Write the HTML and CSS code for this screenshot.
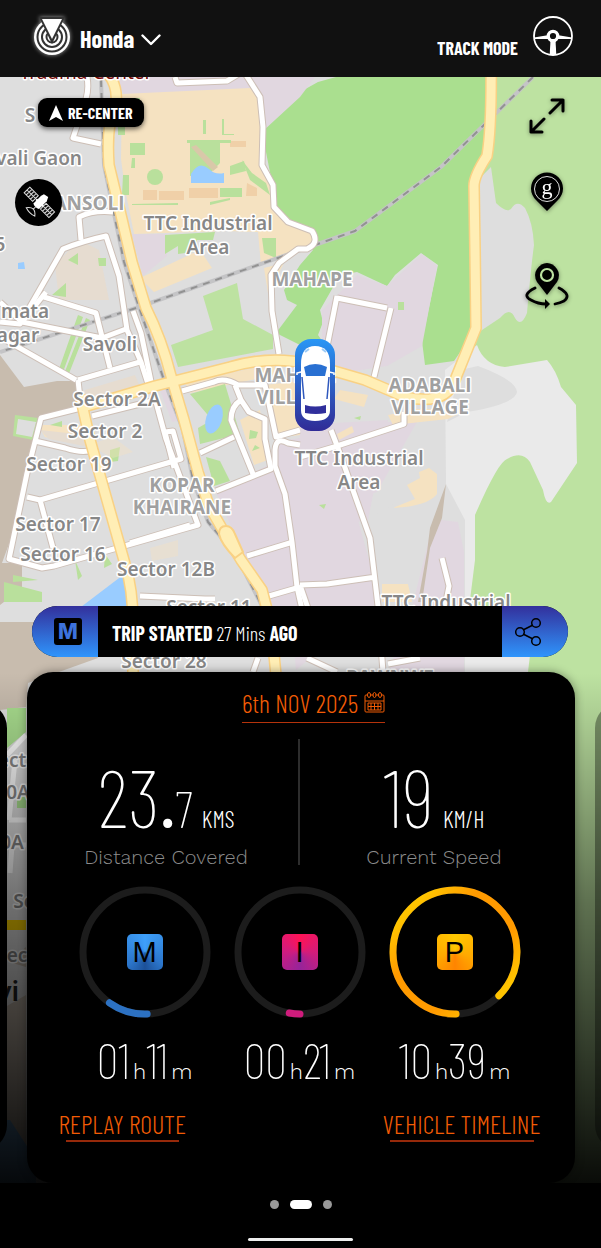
FILE: index.html
```
<!DOCTYPE html>
<html lang="en">
	<head>
		<meta charset="utf-8" />
		<meta name="viewport" content="width=device-width, initial-scale=1" />
		<title>Track Mode</title>
		<link rel="stylesheet" href="styles.css">
	</head>
	<body>
		<header class="topbar">
			<button class="vehicle" type="button">
				<svg class="logo" width="38" height="40" viewBox="0 0 38 40" aria-hidden="true">
					<circle cx="19" cy="20" r="18" fill="#fff"/>
					<g fill="none" stroke="#333" stroke-width="2">
						<circle cx="19" cy="20" r="14.5"/>
						<circle cx="19" cy="20" r="10"/>
						<circle cx="19" cy="20" r="5.5"/>
					</g>
					<path d="M6 0h26L19 27z" fill="#333"/>
					<path d="M9 2h20L19 22z" fill="#fff"/>
				</svg>
				<span>Honda</span>
				<svg width="20" height="12" viewBox="0 0 20 12" aria-hidden="true"><path d="M1.500 1.500l8.500 8.500 8.500-8.500" fill="none" stroke="#fff" stroke-width="2.400" stroke-linecap="round" stroke-linejoin="round"/></svg>
			</button>
			<button class="mode" type="button">
				<span>TRACK MODE</span>
				<svg width="40" height="40" viewBox="0 0 40 40" aria-hidden="true">
					<circle cx="20" cy="20" r="19" fill="none" stroke="#fff" stroke-width="1.800"/>
					<path d="M1 21.500l15-2.500v4L1 23zM39 21.500l-15-2.500v4l15 0z" fill="#fff"/>
					<path d="M17.500 24h5l.8 15h-6.600z" fill="#fff"/>
					<circle cx="20" cy="20" r="4.700" fill="#111" stroke="#fff" stroke-width="3.200"/>
				</svg>
			</button>
		</header>

		<main class="stage">
			<svg class="map" viewBox="0 77 601 1106" preserveAspectRatio="xMidYMin slice" role="img" aria-label="Map">
				<defs>
					<g id="streets">
						<path d="M87 77q2 12-1 22L73 138l28 6"/>
						<path d="M175 77l2 6 50-2 15-9"/>
						<path d="M246 75l14 22 3 30-1 38 11 20 1 22 14 15 24 9q8 12-5 18l-9 0-19 14-8 12 1 36 7 43"/>
						<path d="M81 240l-2-23q14-7 34-5"/>
						<path d="M0 322l20 2 43-75q20-8 43-13l13 40 8 54 14 32 7 22"/>
						<path d="M44 297l52 16 14 55M0 337l76 43M0 302l22 20 80 16 24-9M22 322l24-30"/>
						<path d="M78 380l62-18M78 380l3 28-40 10-14 55-18 86 33 9 12-2 144-41-32-86-13-48-12-58-8-22"/>
						<path d="M35 441l30 7q18 6 27 2M92 416l60-15M27 497l13 3 141-41-8-28-8 1 9 36M40 500l13 48"/>
						<path d="M130 543l60-18"/>
						<path d="M182 391l32-9q10-5 24 3h27l11 52 24-7"/>
						<path d="M235 385l6 15q-10 6-10 20l22 54M241 400l8 12 16 7v20l6 30-55 22M200 453l34-16"/>
						<path d="M300 445l-12-2q-12-7-13 7l0 16 10 28 7 48 5 45 8 36"/>
						<path d="M247 556l46-14M269 596l31-9"/>
						<path d="M337 298l50 10M337 296l-13 66M391 308l-17 69M404 412v12l-70 23-34 10"/>
						<path d="M331 430l7 18 32 90 8 68 5 66M300 585l27-1 49-7M300 585l12 35M442 558l7 28-4 20"/>
						<path d="M140 596l65 3 10 0M307 658l30 14M388 664l32-6M258 658l-5 14"/>
					</g>
					<g id="highways">
						<path d="M108 74Q118 86 116 104Q106 124 109 165L121 215L132 262L146 308Q162 340 171 376L184 420L198 472L209 506L224 532L241 560L262 590L271 625L276 675"/>
						<path d="M80 408l75-22 75-19q40-12 80-3l55 16 40 17q40 9 50-17l21-52-1-78-1-64q0-10 13-30 5-30 4-100"/>
						<path d="M80 395l10 45 35 124q8 25 8 60v48"/>
					</g>
					<path id="rail" d="M533 77l-92 90-86 64-46 16-170 60L0 352"/>
					<path id="rail-south" d="M101 80L104 165L124 262L140 310L164 380L183 430L193 480L208 522L236 555L262 606"/>
					<linearGradient id="car-bg" x1="0" y1="0" x2="0" y2="1">
						<stop offset="0" stop-color="#2996f5"/>
						<stop offset="1" stop-color="#302b96"/>
					</linearGradient>
				</defs>

				<rect y="77" width="601" height="1106" fill="#dedede"/>

				<!-- coast and hills -->
				<path fill="#c8bcae" d="M0 355l24 32 33-6 20 0 4 28-38 10-17 50-8 50-16 44 20 0v25L0 605z"/>
				<path fill="#c8bcae" d="M0 622l78 0 20 36-70 25-6 80H0z"/>
				<path fill="#bde2a1" d="M487 77H601V1183H440V672H470V280z"/>
				<path fill="#dedede" d="M491 167l5 36q10 10 15 6 6-10 14-1 8 15 9 37-3 22-7 68-6 15-12 5-5-12-15 0l-30 20 10-160z"/>
				<path fill="#eaeaea" d="M477 345Q484 365 505 367L547 360Q556 370 561 387L576 405L577 463L551 502Q546 506 543 490L530 462Q522 450 507 459Q498 462 475 515L475 560L470 600L530 655L528 672H465V520L446 484L445 370z"/>
				<path fill="#dedede" d="M460 370l18-4q38 14 39 26-2 12-50 20l-20 10z"/>
				<path fill="#aadf8f" d="M318 82l18-5h150l6 80-18 30v145l-20 29-29 4-3-24 16-76-17-12-26 22-8 11-30-14-17 3-20 35 3 12-5 13 7 10-25 0-24-12 21-28-10-5-3-10 16-25 13-15-14-20-22-22-11-56-2-40z"/>
				<path fill="#bde2a1" d="M203 296l34-13 6 36 30 16 0 14-95 18-7-22 42-15z"/>

				<!-- industrial -->
				<path fill="#e1d7e0" d="M113 77h135l12 16-135 4-9-20zM250 77h65l-15 20-37 34zM132 234h35v22l-24 20z"/>
				<path fill="#e1d7e0" d="M322 310l35-35 30 11 35-32 15 12-15 80-35 20-65 10z"/>
				<path fill="#e1d7e0" d="M215 490l60-28 2-20 110-20 30 0-40 70-77 25 10 140h-20l-50-110zM298 425l90-5-20 100-55 10zM424 518l34 4 6 30v120h-75l30-100zM276 440l60 0 44 160-84 70zM160 390l14 0 8 30-10 2z"/>
				<path fill="#dedede" d="M370 517l22-12 38-50 16 20 0 12-14 40-20 80-32 0z"/>

				<!-- built up -->
				<path fill="#f5e2c1" d="M122 94l128-6 12 15 2 62 10 22 2 20 16 14 20 10q3 14-8 16l-43 18-3-33-32-1-92 3-9-45-4-30z"/>
				<path fill="#f5e2c1" d="M140 278l60-28 12 18-58 24zM264 268l20-5-16 30zM240 420l20-10 8 50-14 5zM265 385l35-4v54l-24 3zM185 383l90-20v12l-85 18zM340 390l28 5-4 12-30-8zM337 434l15-8 2 6-15 8zM394 508q34-2 43-14l0-20-8-6-10 4 1 6-13 7 8 14-20 8zM38 425l52 0 0 20-45-8zM382 584l26 0 4 18h-30zM388 415l30-6 50 0-20 10-55 6z"/>
				<path fill="#f0d0a8" d="M159 191h25v9h-25zM189 188h29v10h-29zM143 190h14v10h-14zM230 141h16v6h-16zM247 183l10 5v8h-11z"/>
				<path fill="#e6dcd0" d="M55 265l24-25 20 10 10 50-50 0zM85 390l50-15 5 12-54 15zM40 430l45 5 4 12-40-8z"/>

				<!-- parks -->
				<g fill="#b9e09c">
					<path d="M130 143h15v12h-15zM190 143h30v20l-10 10-20 3zM220 188h22v9h-22zM187 140h44v3h-44zM132 158l3 0v10h-4zM123 175h6v20h-7zM120 98h20l0 10h-16zM118 125h7v10h-7zM203 120h3v14h-3zM222 119h2v15h10v1h-12zM242 160l8 20 20 15-4-12-14-10zM132 204l46-1v2h-46zM210 202l20-4v2l-20 5z"/>
					<circle cx="155" cy="177" r="8"/>
					<path d="M165 235l50-3-2 8-16 0-4 12-15 2 0-8-13 8zM262 238h14v20l-12-5zM230 166l14-5 2 10-16 4z"/>
					<path d="M52 295l14-12 0 14zM68 260l10-7 0 12zM98 258h8v8h-7zM78 315l5 2-20 55-4-3zM86 318l4 2-22 56-4-2z"/>
					<path d="M190 394l35-10 15 50-40 10-2-16 14-8zM15 415l23 3-5 22-20-4zM110 450l10-3-2 14-8 1zM206 457l14 4 10 20-16 5zM4 582l38 10v10H4zM13 575l25 5-25 2zM75 560l7 16-4 4zM105 554l7 10-8 4zM50 425l12-4 0 6zM398 302h6v8h-6zM354 418l7-2-1 4zM319 505l7-1-2 5zM250 430l8 2-2 6-7 1zM255 445l5 3-8 3z"/>
				</g>
				<path fill="#dedede" d="M18 419l18 3-4 15-16-3z"/>
				<path fill="#d9c8a9" d="M191 147l5-2 22 22-5 4z"/>
				<path fill="#99ccff" d="M191 183v-9q8-14 18-5 6 6 15 4v10zM18 263l6-1 1 7-7 0zM77 610l50-38v38z"/>
				<ellipse cx="214" cy="419" rx="8" ry="15" transform="rotate(18 214 419)" fill="#99ccff"/>
				<path fill="#f5e2c1" d="M88 445l25-8 20 15-20 6zM150 548l28-8v16l-26 5z" opacity=".4"/>
				<path fill="#c8bcae" d="M446 484l-4 34-12 30-8 54-4 0 9-50 3-24z"/>

				<!-- strip of streets between the cards -->
				<path fill="#dedede" d="M0 710l26-3v280H0z"/>
				<path fill="#aadf8f" d="M7 708h19v24L7 748zM17 795h9v13h-9z"/>
				<path fill="#c8bcae" d="M9 962l17-15v20zM0 1010l26-15v188H0z"/>
				<path fill="none" stroke="#fff" stroke-width="5" d="M7 755l19-20M9 820h17M9 820l6-60M10 873l2-28h14"/>
				<path fill="#ffd500" d="M0 920h26v10H0z"/>
				<path fill="#6fa8dc" d="M0 1120h10l26 40v23H0z"/>

				<!-- roads -->
				<use href="#rail" class="rail"/>
				<use href="#rail" class="rail-dash"/>
				<use href="#rail-south" class="rail"/>
				<use href="#rail-south" class="rail-dash"/>
				<use href="#streets" class="street-case"/>
				<use href="#streets" class="street"/>
				<use href="#highways" class="highway-case"/>
				<use href="#highways" class="highway"/>
				<path d="M219 534q0-8 7-8 6 0 9 8l8 18-8 6q-14-14-16-24z" fill="#ffeeb5" stroke="#f9d184" stroke-width="2"/>

				<g class="labels">
					<text x="86" y="79" class="hospital">Trauma Center</text>
					<text x="30" y="122">S</text>
					<text x="39" y="165">vali Gaon</text>
					<text x="89" y="210" class="area">ANSOLI</text>
					<text x="208" y="230">TTC Industrial</text>
					<text x="208" y="254">Area</text>
					<text x="0" y="251">5</text>
					<text x="312" y="286" class="area">MAHAPE</text>
					<text x="25" y="318">mata</text>
					<text x="18" y="342">agar</text>
					<text x="110" y="351">Savoli</text>
					<text x="295" y="382" class="area">MAHAPE</text>
					<text x="295" y="404" class="area">VILLAGE</text>
					<text x="117" y="406">Sector 2A</text>
					<text x="105" y="438">Sector 2</text>
					<text x="69" y="471">Sector 19</text>
					<text x="430" y="392" class="area">ADABALI</text>
					<text x="430" y="414" class="area">VILLAGE</text>
					<text x="359" y="465">TTC Industrial</text>
					<text x="359" y="489">Area</text>
					<text x="182" y="492" class="area">KOPAR</text>
					<text x="182" y="514" class="area">KHAIRANE</text>
					<text x="58" y="531">Sector 17</text>
					<text x="63" y="561">Sector 16</text>
					<text x="166" y="576">Sector 12B</text>
					<text x="209" y="614">Sector 11</text>
					<text x="446" y="609">TTC Industrial</text>
					<text x="164" y="668">Sector 28</text>
					<text x="390" y="684" class="area">PAWNWE</text>
					<text x="12" y="767">ect</text>
					<text x="18" y="799">0A</text>
					<text x="12" y="849">0A</text>
					<text x="24" y="908">Se</text>
					<text x="17" y="962">ec</text>
					<text x="8" y="1001" class="city">vi</text>
				</g>

				<!-- vehicle -->
				<g>
					<rect x="295" y="339" width="40" height="92" rx="16" fill="url(#car-bg)"/>
					<path d="M301 364q0-18 14-18 15 0 15 18v46q0 11-15 11-14 0-14-11z" fill="#fff"/>
					<path d="M304 367q11-6 23 0l-2 9h-19z" fill="#2970d2"/>
					<path d="M305 405q10 3 21 0v8q-10 2-21 0z" fill="#302f9c"/>
					<path d="M302 377l2 22M329 377l-2 22" fill="none" stroke="#2f58bd" stroke-width="1.500"/>
					<path d="M301 372l-4 1v2M329 372l5 1v2" fill="none" stroke="#fff" stroke-width="1.500"/>
					<path d="M305 352l4-3M326 352l-4-3" stroke="#9dcbf6" stroke-width="2"/>
				</g>
			</svg>
			<div class="shade"></div>

			<div class="controls">
				<div class="controls-left">
					<button class="recenter" type="button">
						<svg width="14" height="16" viewBox="0 0 14 16" aria-hidden="true"><path d="M7 0l7 16-7-4-7 4z" fill="#fff"/></svg>
						RE-CENTER
					</button>
					<button class="satellite" type="button" aria-label="Satellite view">
						<svg width="47" height="47" viewBox="0 0 47 47" aria-hidden="true">
							<g transform="rotate(45 24 23)">
								<g fill="#111" stroke="#ddd" stroke-width="1">
									<path d="M7 19h12v8H7zM7 23h12M10 19v8M13 19v8M16 19v8"/>
									<path d="M30 19h12v8H30zM30 23h12M33 19v8M36 19v8M39 19v8"/>
								</g>
								<path d="M20 23h10" stroke="#fff" stroke-width="2"/>
								<path d="M22 14l5-1 2 4 0 11q-4 2-8 0l0-11z" fill="#fff"/>
								<path d="M25 28v4M19 36q6-8 12 0-6 2-12 0z" fill="none" stroke="#ddd" stroke-width="1"/>
							</g>
						</svg>
					</button>
				</div>
				<div class="controls-right">
					<button type="button" aria-label="Full screen">
						<svg width="36" height="36" viewBox="0 0 36 36" aria-hidden="true"><path d="M21 15L34 2M23 2h11v11M15 21L2 34M2 23v11h11" fill="none" stroke="#000" stroke-width="3" stroke-linecap="round" stroke-linejoin="round"/></svg>
					</button>
					<button type="button" aria-label="Open in Google Maps">
						<svg width="34" height="40" viewBox="0 0 34 40" aria-hidden="true">
							<path d="M17 39L6 28A16 16 0 1 1 28 28z" fill="#000"/>
							<circle cx="17" cy="17" r="12.500" fill="none" stroke="#ddd" stroke-width="1"/>
							<text x="17" y="22" class="pin-letter">g</text>
						</svg>
					</button>
					<button type="button" aria-label="Street view">
						<svg width="44" height="48" viewBox="0 0 44 48" aria-hidden="true">
							<path d="M22 33L12 20Q8 13 12 7q4-6 10-6t10 6q4 6 0 13z" fill="#000"/>
							<circle cx="22" cy="13" r="6" fill="none" stroke="#bde2a1" stroke-width="2.200"/>
							<path d="M10 26Q-4 33 6 38q7 4 15 4M34 26q13 7 5 13-4 2-9 3" fill="none" stroke="#000" stroke-width="2.800" stroke-linecap="round"/>
							<path d="M20 37l5 5-5 5z" fill="#000"/>
						</svg>
					</button>
				</div>
			</div>

			<section class="trip">
				<span class="trip-cap"><span class="badge">M</span></span>
				<p><b>TRIP STARTED</b> 27 Mins <b>AGO</b></p>
				<button class="trip-cap share" type="button" aria-label="Share trip">
					<svg width="28" height="30" viewBox="0 0 28 30" aria-hidden="true">
						<path d="M9 13l10-5M9 17l10 5" stroke="#000" stroke-width="1.500"/>
						<g fill="none" stroke="#000" stroke-width="1.500">
							<circle cx="6" cy="15" r="4.300"/><circle cx="22" cy="6" r="4.300"/><circle cx="22" cy="24" r="4.300"/>
						</g>
					</svg>
				</button>
			</section>

			<div class="carousel">
				<div class="card-side"></div>
				<article class="card">
					<button class="date link" type="button">
						6th NOV 2025
						<svg width="21" height="21" viewBox="0 0 21 21" fill="none" stroke="#f25c05" aria-hidden="true">
							<rect x="1" y="3" width="19" height="17" rx="1"/>
							<path d="M1 9h19M4 11h13v7H4zM4 14.500h13M7 11v7M10.500 11v7M14 11v7"/>
							<g fill="#000"><ellipse cx="5" cy="3" rx="1.500" ry="2.500"/><ellipse cx="10.500" cy="3" rx="1.500" ry="2.500"/><ellipse cx="16" cy="3" rx="1.500" ry="2.500"/></g>
						</svg>
					</button>

					<div class="stats">
						<div class="stat">
							<p class="value"><span class="big">23<span class="point">.</span></span><span class="mid">7</span><span class="unit">KMS</span></p>
							<p class="caption">Distance Covered</p>
						</div>
						<div class="stat">
							<p class="value"><span class="big">19</span><span class="unit">KM/H</span></p>
							<p class="caption">Current Speed</p>
						</div>
					</div>

					<div class="rings">
						<div class="ring">
							<div class="dial">
								<svg viewBox="0 0 132 132" aria-hidden="true">
									<circle class="track" cx="66" cy="66" r="62"/>
									<circle class="arc" cx="66" cy="66" r="62" pathLength="360" stroke="#2c71c2" stroke-dasharray="37 323" transform="rotate(88 66 66)"/>
								</svg>
								<span class="tile moving">M</span>
							</div>
							<p class="time">01<small>h</small>11<small>m</small></p>
						</div>
						<div class="ring">
							<div class="dial">
								<svg viewBox="0 0 132 132" aria-hidden="true">
									<circle class="track" cx="66" cy="66" r="62"/>
									<circle class="arc" cx="66" cy="66" r="62" pathLength="360" stroke="#cf1c7c" stroke-dasharray="10 350" transform="rotate(90 66 66)"/>
								</svg>
								<span class="tile idle">I</span>
							</div>
							<p class="time">00<small>h</small>21<small>m</small></p>
						</div>
						<div class="ring">
							<div class="dial">
								<svg viewBox="0 0 132 132" aria-hidden="true">
									<defs>
										<!-- the circle is turned, so the gradient axis is turned with it -->
										<linearGradient id="parked" x1="0" y1="1" x2="1" y2="0">
											<stop offset="0.150" stop-color="#ffc400"/>
											<stop offset="0.350" stop-color="#ff9a00"/>
											<stop offset="0.650" stop-color="#ff9a00"/>
											<stop offset="0.850" stop-color="#ffc400"/>
										</linearGradient>
									</defs>
									<circle class="track" cx="66" cy="66" r="62"/>
									<circle class="arc" cx="66" cy="66" r="62" pathLength="360" stroke="url(#parked)" stroke-dasharray="316 44" transform="rotate(89 66 66)"/>
								</svg>
								<span class="tile parked">P</span>
							</div>
							<p class="time">10<small>h</small>39<small>m</small></p>
						</div>
					</div>

					<div class="actions">
						<a class="link" href="#">REPLAY ROUTE</a>
						<a class="link" href="#">VEHICLE TIMELINE</a>
					</div>
				</article>
				<div class="card-side next"></div>
			</div>
		</main>

		<footer class="bottom">
			<nav class="dots">
				<button type="button" aria-label="Previous day"></button>
				<button type="button" class="on" aria-label="Current day"></button>
				<button type="button" aria-label="Next day"></button>
			</nav>
			<div class="home"></div>
		</footer>
	</body>
</html>
```
FILE: styles.css
```
*{
	margin: 0;
	padding: 0;
	box-sizing: border-box;
}
body{
	background: #000;
	color: #fff;
	font-family: "Barlow Condensed", "Roboto Condensed", "Liberation Sans Narrow", "Liberation Sans", sans-serif;
	min-height: 100vh;
	display: flex;
	flex-direction: column;
}
button{
	background: none;
	border: 0;
	color: inherit;
	font: inherit;
	cursor: pointer;
}
svg{
	display: block;
}

/* top bar */
.topbar{
	height: 77px;
	padding: 0 28px 4px 33px;
	background: #111;
	display: flex;
	align-items: center;
	justify-content: space-between;
}
.vehicle{
	display: flex;
	align-items: center;
	gap: 9px;
	font-size: 24px;
	font-weight: 700;
}
.logo{
	filter: drop-shadow(0 0 2px rgba(255,255,255,0.6));
}
.vehicle span{
	padding-top: 4px;
}
.vehicle svg:last-child{
	margin: 6px 0 0 -2px;
}
.mode{
	display: flex;
	align-items: center;
	gap: 15px;
	font-size: 18px;
	font-weight: 700;
}
.mode span{
	padding-top: 22px;
}
.mode svg{
	margin-bottom: 2px;
}

/* map */
.stage{
	flex: 1;
	position: relative;
	display: flex;
	flex-direction: column;
	justify-content: space-between;
	overflow: hidden;
}
.map{
	position: absolute;
	top: 0;
	left: 0;
	width: 100%;
	height: 100%;
}
.shade{
	position: absolute;
	left: 0;
	right: 0;
	bottom: 0;
	height: 510px;
	background: linear-gradient(rgba(0,0,0,0), rgba(0,0,0,0.5) 45%, rgba(0,0,0,0.95));
}
.street-case, .street, .highway-case, .highway, .rail, .rail-dash{
	fill: none;
	stroke-linejoin: round;
}
.street-case{
	stroke: #cdbfb6;
	stroke-width: 7;
}
.street{
	stroke: #fff;
	stroke-width: 5;
}
.highway-case{
	stroke: #f9d184;
	stroke-width: 12;
}
.highway{
	stroke: #ffeeb5;
	stroke-width: 9;
}
.rail{
	stroke: #c4c4c6;
	stroke-width: 4;
}
.rail-dash{
	stroke: #929292;
	stroke-width: 2;
	stroke-dasharray: 7 6;
}
.labels{
	font-family: "Noto Sans", "Open Sans", sans-serif;
	font-size: 19px;
	font-weight: 600;
	fill: #878787;
	stroke: #fff;
	stroke-width: 3;
	stroke-linejoin: round;
	paint-order: stroke;
	text-anchor: middle;
}
.area{
	font-family: "Open Sans", "Noto Sans", sans-serif;
	font-weight: 700;
	fill: #a0a0a0;
}
.hospital{
	fill: #7a0c0c;
	font-weight: 400;
}
.city{
	fill: #222;
	stroke: none;
	font-size: 27px;
}

/* map buttons */
.controls{
	position: relative;
	display: flex;
	justify-content: space-between;
	padding: 21px 32px 0 15px;
}
.controls-left{
	display: flex;
	flex-direction: column;
	align-items: flex-start;
	gap: 52px;
}
.recenter{
	height: 29px;
	margin-left: 23px;
	padding: 0 12px 0 11px;
	border-radius: 9px;
	background: #000;
	box-shadow: 0 2px 5px rgba(0,0,0,0.6);
	display: flex;
	align-items: center;
	gap: 5px;
	font-size: 16px;
	font-weight: 700;
}
.satellite{
	border-radius: 50%;
	background: #000;
}
.controls-right{
	display: flex;
	flex-direction: column;
	align-items: center;
	gap: 38px;
}
.controls-right button{
	filter: drop-shadow(0 1px 2px rgba(0,0,0,0.4));
}
.controls-right button:last-child{
	margin-top: 12px;
}
.pin-letter{
	font-family: "Liberation Serif", serif;
	font-size: 22px;
	fill: #fff;
	text-anchor: middle;
}

/* trip bar */
.trip{
	position: relative;
	height: 51px;
	margin: auto 33px 15px 32px;
	border-radius: 26px;
	background: #000;
	overflow: hidden;
	display: flex;
	align-items: center;
}
.trip-cap{
	width: 66px;
	height: 100%;
	padding-left: 6px;
	background: linear-gradient(#33309c, #2f95fc);
	display: flex;
	align-items: center;
	justify-content: center;
}
.badge{
	width: 28px;
	height: 27px;
	border-radius: 3px;
	background: #000;
	color: #3d72dc;
	font-family: Inter, sans-serif;
	font-size: 21px;
	font-weight: 800;
	line-height: 27px;
	text-align: center;
}
.share{
	padding: 0 14px 0 0;
}
.trip p{
	flex: 1;
	padding: 2px 0 0 14px;
	font-size: 20px;
	font-weight: 300;
}
.trip b{
	font-weight: 700;
}

/* cards */
.carousel{
	position: relative;
	display: flex;
	justify-content: center;
	gap: 20px;
}
.card-side{
	flex: 0 0 120px;
	margin: 30px 0 32px;
	border-radius: 26px;
	background: #000;
}
.next{
	background: rgba(0,0,0,0.35);
}
.card{
	flex: 0 0 calc(100% - 53px);
	height: 511px;
	padding: 15px 34px 41px 32px;
	border-radius: 26px;
	background: #000;
	box-shadow: 0 0 10px rgba(0,0,0,0.4);
	display: flex;
	flex-direction: column;
	align-items: center;
}
.link{
	color: #f25c05;
	font-size: 26px;
	font-weight: 300;
	line-height: 32px;
	text-decoration: none;
}
.date{
	margin-left: 28px;
	height: 36px;
	padding-bottom: 4px;
	border-bottom: 1px solid #b5330b;
	display: flex;
	align-items: center;
	gap: 6px;
}
.stats{
	width: 100%;
	margin-top: 16px;
	height: 126px;
	display: grid;
	grid-template-columns: 1fr 1fr;
}
.stat{
	display: flex;
	flex-direction: column;
	justify-content: flex-end;
	align-items: center;
}
.stat:first-child{
	padding-right: 24px;
	border-right: 2px solid #2d2d2d;
}
.stat:last-child{
	padding-left: 28px;
}
.value{
	height: 60px;
	margin-bottom: 32px;
	line-height: 78px;
	font-weight: 100;
	white-space: nowrap;
}
.big{
	font-size: 81px;
}
.point{
	font-weight: 400;
}
.mid{
	font-size: 51px;
}
.unit{
	padding-left: 9px;
	font-size: 24px;
	font-weight: 300;
}
.caption{
	font-family: "Work Sans", Inter, sans-serif;
	font-size: 20px;
	font-weight: 300;
	line-height: 16px;
	color: #8c8c8c;
}
.rings{
	width: 100%;
	margin-top: 21px;
	padding: 0 20px;
	display: flex;
	justify-content: space-between;
}
.ring{
	width: 132px;
	display: flex;
	flex-direction: column;
	align-items: center;
}
.dial{
	display: grid;
	place-items: center;
}
.dial svg, .tile{
	grid-area: 1 / 1;
}
.dial svg{
	width: 132px;
}
.track, .arc{
	fill: none;
	stroke-width: 7;
}
.track{
	stroke: #1c1c1c;
}
.arc{
	stroke-linecap: round;
}
.tile{
	width: 36px;
	height: 36px;
	border-radius: 5px;
	color: #000;
	font-family: "Liberation Sans", sans-serif;
	font-size: 29px;
	line-height: 37px;
	text-align: center;
}
.moving{
	background: conic-gradient(#3ea0fb, #2c76cb 35%, #1c5098 50%, #2c76cb 65%, #3ea0fb);
}
.idle{
	background: conic-gradient(#ff1356, #d31c7a 25%, #96249a 50%, #cf1c80 75%, #ff1356);
}
.parked{
	background: conic-gradient(#ffc800, #ffa800 30%, #ff8400 50%, #ffa800 70%, #ffc800);
}
.time{
	margin-top: 13px;
	font-size: 49px;
	font-weight: 200;
	line-height: 58px;
	white-space: nowrap;
}
.time small{
	font-family: "Work Sans", Inter, sans-serif;
	font-size: 22px;
	font-weight: 300;
	padding-left: 3px;
}
.actions{
	width: 100%;
	margin-top: auto;
	display: flex;
	justify-content: space-between;
}
.actions .link::after{
	content: "";
	display: block;
	margin: 0 7px;
	border-bottom: 2px solid #96290a;
}

/* bottom */
.bottom{
	height: 65px;
	padding: 17px 0 7px;
	display: flex;
	flex-direction: column;
	align-items: center;
	justify-content: space-between;
}
.dots{
	display: flex;
	gap: 11px;
}
.dots button{
	width: 9px;
	height: 9px;
	border-radius: 5px;
	background: #999;
}
.dots .on{
	width: 22px;
	background: #fff;
}
.home{
	width: 105px;
	height: 3px;
	border-radius: 2px;
	background: #eee;
}
```
